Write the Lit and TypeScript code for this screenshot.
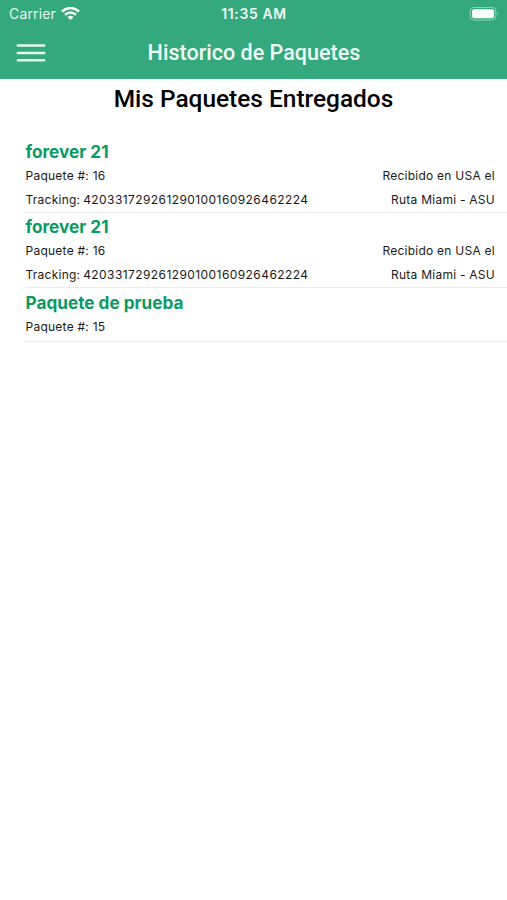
import { LitElement, html, css, nothing } from "lit";
import { customElement } from "lit/decorators.js";

interface Parcel { name: string; id: number; tracking?: string; status?: string; route?: string; }

const parcels: Parcel[] = [
  { name: "forever 21", id: 16, tracking: "420331729261290100160926462224", status: "Recibido en USA el", route: "Ruta Miami - ASU" },
  { name: "forever 21", id: 16, tracking: "420331729261290100160926462224", status: "Recibido en USA el", route: "Ruta Miami - ASU" },
  { name: "Paquete de prueba", id: 15 },
];

@customElement("app-root")
export class AppRoot extends LitElement {
  static styles = css`
    :host { display: block; height: 900px; background: #fff; color: #1a1a1a; font-family: Inter, sans-serif; overflow: hidden; }
    header { background: #34a97d; color: #fff; height: 79px; }
    .status { display: grid; grid-template-columns: 1fr auto 1fr; align-items: center; height: 27px; padding: 0 8px 0 9px; font-size: 14px; }
    .carrier { display: flex; align-items: center; gap: 5.5px; letter-spacing: 0.15px; color: #e4f6ee; }
    .time { font-weight: 600; font-size: 13.9px; letter-spacing: 0.65px; color: #edf9f4; }
    .battery { justify-self: end; display: block; }
    .bar { display: grid; grid-template-columns: 61px 1fr 60px; align-items: center; height: 52px; }
    .menu { margin-left: 16px; display: block; }
    .title { text-align: center; font: 500 21.55px/26px Roboto, sans-serif; white-space: nowrap; color: #f0fbf6; }
    h1 { margin: 0; padding-top: 5px; height: 59px; box-sizing: border-box; text-align: center; font: 500 24.45px/30px Roboto, sans-serif; color: #000; }
    .item { margin-left: 25px; padding: 0 12px 2px 0.5px; box-sizing: border-box; border-bottom: 1px solid #ececec; }
    .item.short { padding-top: 1px; padding-bottom: 2px; }
    h2 { margin: 0; padding-top: 2px; font-size: 17.2px; line-height: 24px; font-weight: 700; color: #0b9a63; }
    .row { display: flex; justify-content: space-between; height: 24px; line-height: 24px; font-size: 12px; letter-spacing: 0.25px; white-space: nowrap; }
    .row + .row { margin-bottom: -2px; }
    .number { margin-left: -0.8px; letter-spacing: 0.42px; }
  `;

  render() {
    return html`
      <header>
        <div class="status">
          <div class="carrier"><span>Carrier</span>
            <svg width="19" height="14" viewBox="0 0 19 14" fill="none" stroke="#fff" stroke-width="2.5"><path d="M1 4.5Q9.5-2.5 18 4.5M4 7.8Q9.5 3.3 15 7.8"/><path d="M6.5 9.9Q9.5 7.7 12.5 9.9L9.5 13Z" fill="#fff" stroke="none"/></svg>
          </div>
          <div class="time">11:35 AM</div>
          <svg class="battery" width="30" height="14" viewBox="0 0 30 14"><rect x="1.3" y=".5" width="25.5" height="12.5" rx="3.5" fill="none" stroke="#fff" opacity=".45"/><rect x="3.1" y="2.3" width="22" height="9" rx="2" fill="#fff"/><path d="M28 4.5q1.8 2 0 4z" fill="#fff" opacity=".55"/></svg>
        </div>
        <div class="bar">
          <svg class="menu" width="30" height="20" viewBox="0 0 30 20"><path d="M1.8 2.5h26.4M1.8 10h26.4M1.8 17.3h26.4" stroke="#e6f7ef" stroke-width="2.5" stroke-linecap="round"/></svg>
          <div class="title">Historico de Paquetes</div>
        </div>
      </header>
      <h1>Mis Paquetes Entregados</h1>
      ${parcels.map((p) => html`
        <section class="item ${p.tracking ? "" : "short"}">
          <h2>${p.name}</h2>
          <div class="row"><span>Paquete #: ${p.id}</span><span>${p.status ?? nothing}</span></div>
          ${p.tracking ? html`<div class="row"><span>Tracking: <span class="number">${p.tracking}</span></span><span>${p.route}</span></div>` : nothing}
        </section>`)}
    `;
  }
}
